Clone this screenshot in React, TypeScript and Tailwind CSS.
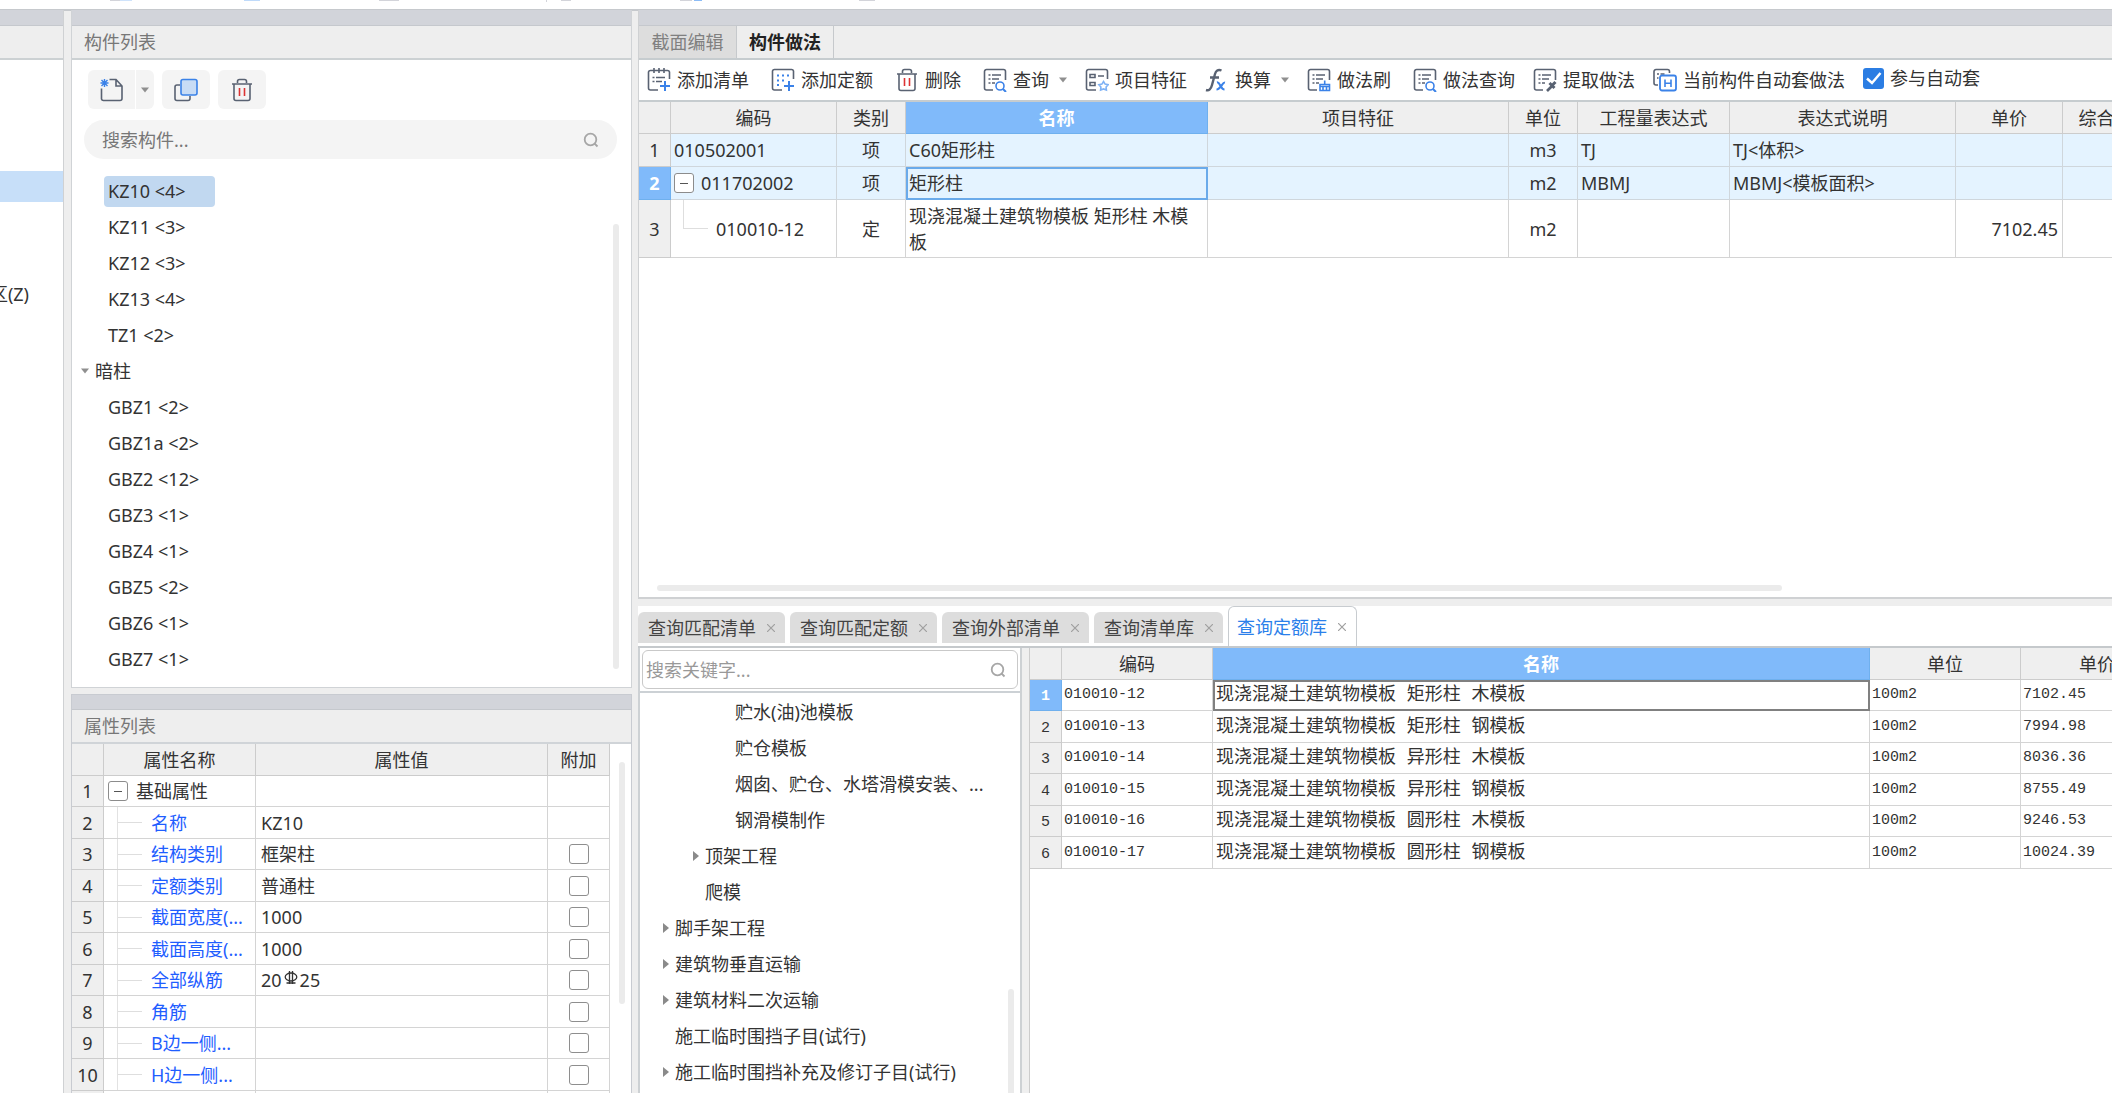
import React from "react";

const INK = "#596272";
const BLUE = "#3b82e8";

type IconProps = { className?: string };

function Svg({ children, className = "size-6 shrink-0" }: { children: React.ReactNode; className?: string }) {
  return (
    <svg viewBox="0 0 24 24" fill="none" stroke={INK} strokeWidth="1.6" strokeLinecap="butt" className={className} aria-hidden="true">
      {children}
    </svg>
  );
}

const SheetFrame = () => <path d="M10 22H3.5A2 2 0 0 1 1.5 20V3.5A2 2 0 0 1 3.500 1.500H20.500A2 2 0 0 1 22.500 3.500V12" />;
const SheetLines = () => (
  <path d="M5.500 7h2M9 7h9M5.500 11h2M9 11h7M5.500 15h2M9 15h3" />
);

const AddListIcon = () => (
  <Svg>
    <path d="M11 22H3.500A2 2 0 0 1 1.500 20V4A2 2 0 0 1 3.500 2.500H20.500A2 2 0 0 1 22.500 4V11" />
    <path d="M7 0v5M12 0v5M17 0v5" />
    <path d="M5.500 9.500h2M9 9.500h9M5.500 13.500h2M9 13.500h6" />
    <path d="M18 13v10M13 18h10" stroke={BLUE} strokeWidth="2" />
  </Svg>
);
const AddQuotaIcon = () => (
  <Svg>
    <path d="M11 22H3.500A2 2 0 0 1 1.500 20V3A2 2 0 0 1 3.500 1.500H20.500A2 2 0 0 1 22.500 3V11" />
    <path d="M6 7.500h2M11 7.500h2M16 7.500h2M6 12.500h2M11 12.500h2M6 17h2" stroke={BLUE} strokeWidth="2" />
    <path d="M18 13v10M13 18h10" stroke={BLUE} strokeWidth="2" />
  </Svg>
);
const TrashIcon = ({ className }: IconProps) => (
  <Svg className={className}>
    <path d="M7.500 5V3.500A2 2 0 0 1 9.500 1.500h5A2 2 0 0 1 16.500 3.500V5M2 6h20M4 6v14.500A2 2 0 0 0 6 22.500h12A2 2 0 0 0 20 20.500V6" />
    <path d="M9.500 10v8M14.500 10v8" stroke="#dd3333" />
  </Svg>
);
const QueryIcon = () => (
  <Svg>
    <SheetFrame />
    <SheetLines />
    <circle cx="17" cy="18" r="4" stroke={BLUE} />
    <path d="M20 21l3 3" stroke={BLUE} strokeWidth="2" />
  </Svg>
);
const FeatureIcon = () => (
  <Svg>
    <path d="M11 22H3.500A2 2 0 0 1 1.500 20V3.500A2 2 0 0 1 3.500 1.500H20.500A2 2 0 0 1 22.500 3.500V11" />
    <path d="M5 6.500h5v3H5zM5 14.500h5v3H5zM13 8h6" />
    <path d="M18.500 13.500l1.600 2.600 3 .6-2 2.300.3 3.100-2.900-1.200-2.900 1.200.3-3.100-2-2.300 3-.6z" stroke="#7fb2f5" />
  </Svg>
);
const FxIcon = () => (
  <Svg>
    <path d="M1 22c3 1 5-1 6-5l3-11c.8-3 3-5 6.500-3.500M5 9.500h9" strokeWidth="2.400" />
    <path d="M12 14.500c3-1 3.500 7 7.500 7M20 14.500c-2.500-.5-4.500 7-8.500 7" stroke={BLUE} strokeWidth="2.200" />
  </Svg>
);
const BrushIcon = () => (
  <Svg>
    <SheetFrame />
    <SheetLines />
    <path d="M13 22.500v-6h9.500v6zM17.700 12.500v4M16 19v3.500M19.500 19v3.500M13 18.500h9.500" stroke={BLUE} />
  </Svg>
);
const ExtractIcon = () => (
  <Svg>
    <SheetFrame />
    <SheetLines />
    <path d="M14 23l5-5" strokeWidth="2.600" />
    <path d="M16.500 15l5 5M18.500 18l4-4" strokeWidth="3" />
  </Svg>
);
const AutoIcon = () => (
  <Svg>
    <path d="M5 17H3A2 2 0 0 1 1 15V3.500A2 2 0 0 1 3 1.500H14.500A2 2 0 0 1 16.500 3.500V5M4 6h2M7.500 6h4M4 10h1.500" />
    <rect x="7" y="7.500" width="16" height="15" rx="2" stroke={BLUE} strokeWidth="1.800" />
    <path d="M12 11.500v7.500M18 11.500v7.500M12 15.200h6" stroke={BLUE} />
  </Svg>
);
const NewIcon = () => (
  <Svg>
    <path d="M1.500 10.500V21A2 2 0 0 0 3.500 22.500H20A2 2 0 0 0 22 20.500V8L16 1.500H9.500M16 1.500V8h6" />
    <path d="M4.500 1v8M.5 5h8M1.500 2l6 6M7.500 2l-6 6" stroke={BLUE} strokeWidth="1.400" />
  </Svg>
);
const CopyIcon = () => (
  <Svg>
    <path d="M6 7H3A2 2 0 0 0 1 9V20.500A2 2 0 0 0 3 22.500H14A2 2 0 0 0 16 20.500V18" />
    <rect x="7" y="1.500" width="16" height="15.500" rx="2" stroke={BLUE} fill="#c8dcf5" />
  </Svg>
);
const SearchIcon = () => (
  <svg viewBox="0 0 16 16" fill="none" stroke="#a6a6a6" strokeWidth="1.800" className="size-4 shrink-0" aria-hidden="true">
    <circle cx="7.500" cy="7.500" r="5.800" />
    <path d="M11.500 11.500l3 3" />
  </svg>
);
const DownTriangle = () => (
  <svg viewBox="0 0 8 6" className="h-1.5 w-2 shrink-0 fill-[#8f8f8f]" aria-hidden="true">
    <path d="M0 .5h8L4 5.500z" />
  </svg>
);
const RightTriangle = () => (
  <svg viewBox="0 0 6 10" className="h-2.5 w-1.5 shrink-0 fill-[#8a8a8a]" aria-hidden="true">
    <path d="M0 0v10l6-5z" />
  </svg>
);
const RebarIcon = () => (
  <svg viewBox="0 0 14 16" fill="none" stroke="#333" strokeWidth="1.300" className="mb-1 h-4 w-3.5 shrink-0" aria-label="Φ" role="img">
    <ellipse cx="7" cy="7" rx="5.800" ry="4" />
    <path d="M5.500 1v13M8.500 1v13M2.500 13h9" />
  </svg>
);

function ToggleBox() {
  return (
    <button type="button" aria-label="折叠" className="flex size-5 shrink-0 items-center justify-center rounded-[3px] border border-[#8c8c8c] bg-white">
      <span className="h-px w-2 bg-[#555]" />
    </button>
  );
}

const members = ["KZ10 <4>", "KZ11 <3>", "KZ12 <3>", "KZ13 <4>", "TZ1 <2>"];
const hidden = ["GBZ1 <2>", "GBZ1a <2>", "GBZ2 <12>", "GBZ3 <1>", "GBZ4 <1>", "GBZ5 <2>", "GBZ6 <1>", "GBZ7 <1>"];

function MemberPanel() {
  return (
    <section className="flex h-[678px] shrink-0 flex-col border-x border-b border-[#d0d3d6] bg-white">
      <div className="h-4 shrink-0 border-b border-[#c5c8cd] bg-[#d2d4da]" />
      <h2 className="flex h-[34px] shrink-0 items-center border-b-2 border-[#ccd1d3] bg-[#eeeeee] px-3 text-[#777]">构件列表</h2>
      <div className="flex shrink-0 gap-2 px-4 pt-2.5">
        <div className="flex gap-px">
          <button type="button" aria-label="新建" className="flex h-[39px] w-[47px] items-center justify-center rounded-l-md bg-[#f4f4f4]">
            <NewIcon />
          </button>
          <button type="button" aria-label="新建选项" className="flex h-[39px] w-[18px] items-center justify-center rounded-r-md bg-[#f4f4f4]">
            <DownTriangle />
          </button>
        </div>
        <button type="button" aria-label="复制" className="flex h-[39px] w-12 items-center justify-center rounded-md bg-[#f4f4f4]">
          <CopyIcon />
        </button>
        <button type="button" aria-label="删除" className="flex h-[39px] w-12 items-center justify-center rounded-md bg-[#f4f4f4]">
          <TrashIcon />
        </button>
      </div>
      <label className="mt-[11px] mr-3.5 ml-3 flex h-[39px] shrink-0 items-center rounded-full bg-[#f4f4f4] px-[18px]">
        <input type="text" aria-label="搜索构件" placeholder="搜索构件..." className="min-w-0 flex-1 bg-transparent outline-none placeholder:text-[#777]" />
        <SearchIcon />
      </label>
      <div className="relative mt-[14px] flex-1">
        <ul>
          {members.map((m, i) => (
            <li key={m} className="flex h-9 items-center pl-8">
              <span className={i === 0 ? "flex h-[31px] w-[111px] items-center rounded-[4px] bg-[#c1d8f0] pl-1" : "pl-1"}>{m}</span>
            </li>
          ))}
          <li>
            <div className="flex h-9 items-center gap-1.5 pl-[9px]">
              <DownTriangle />
              暗柱
            </div>
            <ul>
              {hidden.map((m) => (
                <li key={m} className="flex h-9 items-center pl-9">{m}</li>
              ))}
            </ul>
          </li>
        </ul>
        <div className="absolute top-[51px] right-3 bottom-[18px] w-1.5 rounded-full bg-[#ebebeb]" />
      </div>
    </section>
  );
}

type Prop = { name: string; value?: React.ReactNode; check?: boolean; root?: boolean };
const props: Prop[] = [
  { name: "基础属性", root: true },
  { name: "名称", value: "KZ10" },
  { name: "结构类别", value: "框架柱", check: true },
  { name: "定额类别", value: "普通柱", check: true },
  { name: "截面宽度(...", value: "1000", check: true },
  { name: "截面高度(...", value: "1000", check: true },
  { name: "全部纵筋", value: <span className="flex items-center gap-0.5">20<RebarIcon />25</span>, check: true },
  { name: "角筋", check: true },
  { name: "B边一侧...", check: true },
  { name: "H边一侧...", check: true },
];

const cell = "border-r border-b border-[#d4d4d4] p-0";
const head = "border-r border-b border-[#cccccc] bg-[#efefef] p-0 font-normal";

function PropertyPanel() {
  return (
    <section className="mt-1.5 flex min-h-0 flex-1 flex-col border-x border-t border-[#c8cbd1] bg-white">
      <div className="h-[15px] shrink-0 border-b border-[#c5c8cd] bg-[#d2d4da]" />
      <h2 className="flex h-[34px] shrink-0 items-center border-b-2 border-[#d0d4d8] bg-[#eeeeee] px-3 text-[#777]">属性列表</h2>
      <div className="relative min-h-0 flex-1 overflow-hidden">
        <table className="w-[538px] table-fixed border-separate border-spacing-0">
          <colgroup>
            <col className="w-8" />
            <col className="w-[152px]" />
            <col className="w-[292px]" />
            <col className="w-[62px]" />
          </colgroup>
          <thead>
            <tr className="h-8">
              <th className={head} />
              <th className={head}>属性名称</th>
              <th className={head}>属性值</th>
              <th className={head}>附加</th>
            </tr>
          </thead>
          <tbody>
            {props.map((p, i) => (
              <tr key={p.name}>
                <th className={head}>{i + 1}</th>
                <td className={cell}>
                  <div className={i % 2 ? "flex h-[31px] items-center" : "flex h-[30px] items-center"}>
                    {p.root ? (
                      <div className="flex items-center gap-2 pl-1">
                        <ToggleBox />
                        {p.name}
                      </div>
                    ) : (
                      <>
                        <span className="ml-[13px] w-px self-stretch bg-[#e2e2e2]" />
                        <span className="mr-[9px] h-px w-6 bg-[#dedede]" />
                        <span className="text-[#1f5eff]">{p.name}</span>
                      </>
                    )}
                  </div>
                </td>
                <td className={`${cell} pl-[5px]`}>{p.value}</td>
                <td className={cell}>
                  {p.check && (
                    <input type="checkbox" aria-label={`附加 ${p.name}`} className="mx-auto block size-5 appearance-none rounded-[3px] border border-[#8e8e8e] bg-white" />
                  )}
                </td>
              </tr>
            ))}
            <tr className="h-8">
              <th className={head} />
              <td className={cell} />
              <td className={cell} />
              <td className={cell} />
            </tr>
          </tbody>
        </table>
        <div className="absolute top-[18px] right-1.5 h-[242px] w-1.5 rounded-full bg-[#ebebeb]" />
      </div>
    </section>
  );
}

const tools: { label: string; icon: React.ReactNode; menu?: boolean; wide?: boolean }[] = [
  { label: "添加清单", icon: <AddListIcon />, wide: true },
  { label: "添加定额", icon: <AddQuotaIcon />, wide: true },
  { label: "删除", icon: <TrashIcon />, wide: true },
  { label: "查询", icon: <QueryIcon />, menu: true },
  { label: "项目特征", icon: <FeatureIcon /> },
  { label: "换算", icon: <FxIcon />, menu: true },
  { label: "做法刷", icon: <BrushIcon />, wide: true },
  { label: "做法查询", icon: <QueryIcon /> },
  { label: "提取做法", icon: <ExtractIcon /> },
  { label: "当前构件自动套做法", icon: <AutoIcon /> },
];

const pale = "border-r border-b border-[#cfd6dc] bg-[#e4f3ff] p-0";
const hot = "border-r border-b border-[#6fb0ee] bg-[#80bafa] p-0 font-bold text-white";

function MethodPanel() {
  return (
    <section className="flex h-[589px] shrink-0 flex-col border-b-2 border-l border-[#cfd1d3] bg-white">
      <div className="h-4 shrink-0 border-b border-[#c5c8cd] bg-[#d2d4da]" />
      <div role="tablist" className="flex h-[34px] shrink-0 border-b-2 border-[#c6cccf] bg-[#eeeeee]">
        <button type="button" role="tab" className="w-[98px] border-r border-[#c6c9cc] bg-[#dddddd] text-[#808080]">截面编辑</button>
        <button type="button" role="tab" aria-selected="true" className="w-[97px] border-r border-[#c6c9cc] font-bold text-[#222]">构件做法</button>
      </div>
      <div className="flex h-[42px] shrink-0 items-center gap-[18px] border-b-2 border-[#c6cccf] pl-2 whitespace-nowrap">
        {tools.map((t) => (
          <button key={t.label} type="button" className={t.wide ? "mr-1 flex shrink-0 items-center gap-1.5" : "flex shrink-0 items-center gap-1.5"}>
            {t.icon}
            <span>{t.label}</span>
            {t.menu && <span className="pl-1"><DownTriangle /></span>}
          </button>
        ))}
        <label className="flex shrink-0 items-center gap-1.5 pb-1">
          <span className="grid">
            <input type="checkbox" defaultChecked className="col-start-1 row-start-1 size-[21px] appearance-none rounded-[3px] bg-[#2b7de3]" />
            <svg viewBox="0 0 21 21" fill="none" stroke="#fff" strokeWidth="2.500" className="pointer-events-none col-start-1 row-start-1 size-[21px]" aria-hidden="true">
              <path d="M4 10.500l5 4.500 8.500-10" />
            </svg>
          </span>
          参与自动套
        </label>
      </div>
      <div className="min-h-0 flex-1 overflow-hidden">
        <table className="w-[1528px] table-fixed border-separate border-spacing-0">
          <colgroup>
            <col className="w-8" />
            <col className="w-[166px]" />
            <col className="w-[69px]" />
            <col className="w-[302px]" />
            <col className="w-[301px]" />
            <col className="w-[69px]" />
            <col className="w-[152px]" />
            <col className="w-[226px]" />
            <col className="w-[107px]" />
            <col className="w-[104px]" />
          </colgroup>
          <thead>
            <tr className="h-8">
              <th className={head} />
              <th className={head}>编码</th>
              <th className={head}>类别</th>
              <th className={hot}>名称</th>
              <th className={head}>项目特征</th>
              <th className={head}>单位</th>
              <th className={head}>工程量表达式</th>
              <th className={head}>表达式说明</th>
              <th className={head}>单价</th>
              <th className={head}>综合单价</th>
            </tr>
          </thead>
          <tbody>
            <tr className="h-[33px]">
              <th className={head}>1</th>
              <td className={`${pale} pl-[3px]`}>010502001</td>
              <td className={`${pale} text-center`}>项</td>
              <td className={`${pale} pl-[3px]`}>C60矩形柱</td>
              <td className={pale} />
              <td className={`${pale} text-center`}>m3</td>
              <td className={`${pale} pl-[3px]`}>TJ</td>
              <td className={`${pale} pl-[3px]`}>TJ&lt;体积&gt;</td>
              <td className={pale} />
              <td className={pale} />
            </tr>
            <tr className="h-[33px]">
              <th className={hot}>2</th>
              <td className={pale}>
                <div className="flex items-center gap-[7px] pl-[3px]">
                  <ToggleBox />
                  011702002
                </div>
              </td>
              <td className={`${pale} text-center`}>项</td>
              <td className={`${pale} pl-[3px] outline-2 -outline-offset-2 outline-[#6aaaea]`}>矩形柱</td>
              <td className={pale} />
              <td className={`${pale} text-center`}>m2</td>
              <td className={`${pale} pl-[3px]`}>MBMJ</td>
              <td className={`${pale} pl-[3px]`}>MBMJ&lt;模板面积&gt;</td>
              <td className={pale} />
              <td className={pale} />
            </tr>
            <tr>
              <th className={head}>3</th>
              <td className={cell}>
                <div className="flex h-[57px] items-center">
                  <span className="ml-3 h-[29px] w-[25px] self-start border-b border-l border-[#dedede]" />
                  <span className="pl-2">010010-12</span>
                </div>
              </td>
              <td className={`${cell} text-center`}>定</td>
              <td className={`${cell} pr-2 pl-[3px] leading-[26px]`}>现浇混凝土建筑物模板 矩形柱 木模板</td>
              <td className={cell} />
              <td className={`${cell} text-center`}>m2</td>
              <td className={cell} />
              <td className={cell} />
              <td className={`${cell} pr-1 text-right`}>7102.45</td>
              <td className={cell} />
            </tr>
          </tbody>
        </table>
      </div>
      <div className="mb-1.5 ml-[18px] h-1.5 w-[1125px] shrink-0 rounded-full bg-[#ebebeb]" />
    </section>
  );
}

const closedTabs = ["查询匹配清单", "查询匹配定额", "查询外部清单", "查询清单库"];

const Close = ({ label }: { label: string }) => (
  <button type="button" aria-label={`关闭${label}`}>
    <svg viewBox="0 0 8 8" stroke="#a0a0a0" strokeWidth="1.200" className="size-2" aria-hidden="true">
      <path d="M0 0l8 8M8 0L0 8" />
    </svg>
  </button>
);

const tree: { label: string; level: 0 | 1 | 2; arrow?: boolean }[] = [
  { label: "贮水(油)池模板", level: 2 },
  { label: "贮仓模板", level: 2 },
  { label: "烟囱、贮仓、水塔滑模安装、...", level: 2 },
  { label: "钢滑模制作", level: 2 },
  { label: "顶架工程", level: 1, arrow: true },
  { label: "爬模", level: 1 },
  { label: "脚手架工程", level: 0, arrow: true },
  { label: "建筑物垂直运输", level: 0, arrow: true },
  { label: "建筑材料二次运输", level: 0, arrow: true },
  { label: "施工临时围挡子目(试行)", level: 0 },
  { label: "施工临时围挡补充及修订子目(试行)", level: 0, arrow: true },
];
const indent = ["pl-[23px]", "pl-[53px]", "pl-[83px]"];

const quotas = [
  ["010010-12", "现浇混凝土建筑物模板 矩形柱 木模板", "7102.45"],
  ["010010-13", "现浇混凝土建筑物模板 矩形柱 钢模板", "7994.98"],
  ["010010-14", "现浇混凝土建筑物模板 异形柱 木模板", "8036.36"],
  ["010010-15", "现浇混凝土建筑物模板 异形柱 钢模板", "8755.49"],
  ["010010-16", "现浇混凝土建筑物模板 圆形柱 木模板", "9246.53"],
  ["010010-17", "现浇混凝土建筑物模板 圆形柱 钢模板", "10024.39"],
];
const line = "border-r border-b border-[#d4d4d4] py-0 pr-0";
const mono = "pl-0.5 text-[15px] font-['Liberation_Mono','Noto_Sans_CJK_SC',monospace]";

function QueryPanel() {
  return (
    <section className="mt-[7px] flex min-h-0 flex-1 flex-col bg-white">
      <div role="tablist" className="flex h-10 shrink-0 items-end gap-[5px]">
        {closedTabs.map((t) => (
          <div key={t} className="mb-[3px] flex h-[31px] items-center gap-[11px] rounded-t-md bg-[#dddddd] px-2.5 text-[#444]">
            <button type="button" role="tab">{t}</button>
            <Close label={t} />
          </div>
        ))}
        <div className="flex h-10 items-center gap-[11px] rounded-t-md border-x border-t border-[#c8ccd0] pr-2.5 pl-2">
          <button type="button" role="tab" aria-selected="true" className="text-[#2b80ea]">查询定额库</button>
          <Close label="查询定额库" />
        </div>
      </div>
      <div className="flex min-h-0 flex-1 border-t-2 border-[#c5c9cc]">
        <div className="flex w-[384px] shrink-0 flex-col border-x-2 border-[#cdd1d4]">
          <div className="shrink-0 border-b-2 border-[#ccd1d5] p-0.5">
            <label className="flex h-[39px] items-center rounded-md border border-[#c9c9c9] pr-[11px] pl-[3px]">
              <input type="text" aria-label="搜索关键字" placeholder="搜索关键字..." className="min-w-0 flex-1 bg-transparent outline-none placeholder:text-[#999]" />
              <SearchIcon />
            </label>
          </div>
          <div className="relative min-h-0 flex-1 overflow-hidden">
            <ul className="pt-px">
              {tree.map((n) => (
                <li key={n.label} className={`flex h-9 items-center gap-1.5 whitespace-nowrap ${indent[n.level]}`}>
                  {n.arrow ? <RightTriangle /> : <span className="w-1.5" />}
                  {n.label}
                </li>
              ))}
            </ul>
            <div className="absolute top-[296px] right-1.5 bottom-0 w-1.5 rounded-t-full bg-[#ebebeb]" />
          </div>
        </div>
        <div className="w-[7px] shrink-0 bg-[#efefef]" />
        <div className="min-w-0 flex-1 overflow-hidden border-l border-[#cccccc]">
          <table className="w-[1144px] table-fixed border-separate border-spacing-0">
            <colgroup>
              <col className="w-8" />
              <col className="w-[151px]" />
              <col className="w-[657px]" />
              <col className="w-[151px]" />
              <col className="w-[153px]" />
            </colgroup>
            <thead>
              <tr className="h-8">
                <th className={head} />
                <th className={head}>编码</th>
                <th className={hot}>名称</th>
                <th className={head}>单位</th>
                <th className={head}>单价</th>
              </tr>
            </thead>
            <tbody>
              {quotas.map(([code, name, price], i) => (
                <tr key={code} className={i % 2 ? "h-8" : "h-[31px]"}>
                  <th className={i === 0 ? `${hot} pt-1 text-[15px] font-['Liberation_Mono',monospace]` : `${head} pt-1 text-[15px] font-['Liberation_Mono',monospace]`}>{i + 1}</th>
                  <td className={`${line} ${mono}`}>{code}</td>
                  <td className={`${line} pl-[3px] font-['Liberation_Mono','Noto_Sans_CJK_SC',monospace] ${i === 0 ? "outline-2 -outline-offset-2 outline-[#808080]" : ""}`}>{name}</td>
                  <td className={`${line} ${mono}`}>100m2</td>
                  <td className={`${line} ${mono}`}>{price}</td>
                </tr>
              ))}
            </tbody>
          </table>
        </div>
      </div>
    </section>
  );
}

export default function App() {
  return (
    <div className="flex h-screen flex-col overflow-hidden bg-white font-['Noto_Sans','Noto_Sans_CJK_SC',sans-serif] text-[18px] leading-6 text-[#333]">
      <div className="flex h-[9px] shrink-0 items-start">
        <span className="ml-[110px] h-px w-2.5 bg-[#d3d4da]" />
        <span className="h-px w-3 bg-[#cfe3fb]" />
        <span className="ml-28 h-px w-4 bg-[#bfdafa]" />
        <span className="ml-[119px] h-px w-5 bg-[#d3d4da]" />
        <span className="ml-[147px] h-0.5 w-px bg-[#d3d4da]" />
        <span className="ml-3.5 h-px w-2.5 bg-[#d3d4da]" />
        <span className="ml-[109px] h-px w-3 bg-[#d3d4da]" />
        <span className="ml-0.5 h-px w-2 bg-[#8cbcf6]" />
        <span className="ml-[157px] h-px w-4 bg-[#d3d4da]" />
      </div>
      <div className="flex min-h-0 flex-1 border-t-2 border-[#c6c9cd] bg-[#eeeeee]">
        <aside className="-mt-px flex w-16 shrink-0 flex-col overflow-hidden border-r border-[#cfd1d3] bg-white">
          <div className="h-4 shrink-0 border-b border-[#c5c8cd] bg-[#d2d4da]" />
          <div className="h-[34px] shrink-0 border-b-2 border-[#ccd1d3] bg-[#eeeeee]" />
          <div className="mt-[111px] h-[31px] shrink-0 bg-[#c7dff9]" />
          <div className="mt-20 flex justify-end pr-[34px] whitespace-nowrap">区(Z)</div>
        </aside>
        <div className="-mt-px ml-[7px] flex w-[561px] shrink-0 flex-col">
          <MemberPanel />
          <PropertyPanel />
        </div>
        <main className="-mt-px ml-1.5 flex min-w-0 flex-1 flex-col">
          <MethodPanel />
          <QueryPanel />
        </main>
      </div>
    </div>
  );
}
